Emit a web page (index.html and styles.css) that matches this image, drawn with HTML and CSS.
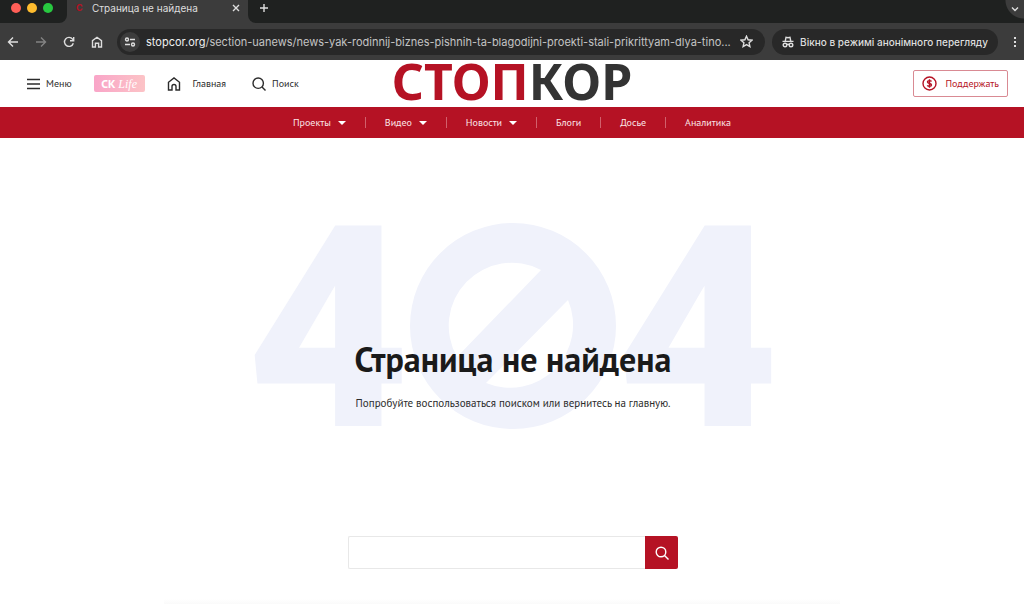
FILE: index.html
```html
<!DOCTYPE html>
<html lang="ru">
<head>
    <meta charset="UTF-8">
    <meta name="viewport" content="width=device-width, initial-scale=1.0">
    <title>Страница не найдена</title>
    <link rel="stylesheet" href="styles.css">
</head>
<body>
    <!-- Browser window -->
    <div class="browser">
        <div class="tab-strip">
            <div class="lights">
                <span class="light red"></span>
                <span class="light yellow"></span>
                <span class="light green"></span>
            </div>
            <div class="tab">
                <span class="favicon"><b>С</b></span>
                <span class="tab-title">Страница не найдена</span>
                <button class="icon-btn" aria-label="Закрыть вкладку">
                    <svg width="8" height="8" viewBox="0 0 8 8"><path d="M1 1l6 6M7 1l-6 6"/></svg>
                </button>
            </div>
            <button class="icon-btn new-tab" aria-label="Новая вкладка">
                <svg width="10" height="10" viewBox="0 0 10 10"><path d="M5 1v8M1 5h8"/></svg>
            </button>
            <button class="icon-btn tab-search" aria-label="Поиск вкладок">
                <svg width="8" height="8" viewBox="0 0 8 8"><path d="M1 2.5l3 3 3-3"/></svg>
            </button>
        </div>
        <div class="toolbar">
            <div class="nav-buttons">
                <button class="icon-btn" aria-label="Назад">
                    <svg width="12" height="12" viewBox="0 0 12 12"><path d="M11 6H1.5M6 1.5L1.5 6 6 10.5"/></svg>
                </button>
                <button class="icon-btn dim" aria-label="Вперёд">
                    <svg width="12" height="12" viewBox="0 0 12 12"><path d="M1 6h9.5M6 1.5L10.5 6 6 10.5"/></svg>
                </button>
                <button class="icon-btn" aria-label="Обновить">
                    <svg width="12" height="12" viewBox="0 0 12 12"><path d="M10.3 7.2A4.5 4.5 0 1 1 9.6 3.2L10.5 4.5M10.7 1v3.7H7"/></svg>
                </button>
                <button class="icon-btn" aria-label="Домой">
                    <svg width="12" height="12" viewBox="0 0 12 12"><path d="M1.5 11V4.7L6 1.3l4.5 3.4V11H7.6V7.2H4.4V11z"/></svg>
                </button>
            </div>
            <div class="address">
                <span class="site-info">
                    <svg width="12" height="12" viewBox="0 0 12 12"><circle cx="3" cy="3.5" r="1.5"/><path d="M6 3.5h5M1 8.5h5"/><circle cx="9" cy="8.5" r="1.5"/></svg>
                </span>
                <span class="url"><b>stopcor.org</b>/section-uanews/news-yak-rodinnij-biznes-pishnih-ta-blagodijni-proekti-stali-prikrittyam-dlya-tino...</span>
                <button class="icon-btn" aria-label="Добавить в закладки">
                    <svg width="13" height="13" viewBox="0 0 13 13"><path d="M6.5 1.2l1.6 3.6 3.9.4-2.9 2.6.8 3.8-3.4-2-3.4 2 .8-3.8L1 5.2l3.9-.4z"/></svg>
                </button>
            </div>
            <div class="incognito">
                <svg width="12" height="12" viewBox="0 0 12 12"><path d="M3.3 4.8L4 1.3l2 .5 2-.5.7 3.5M.5 5.4h11M4.9 9a1.2 1.2 0 0 1 2.2 0"/><circle cx="3" cy="9" r="1.8"/><circle cx="9" cy="9" r="1.8"/></svg>
                <span>Вікно в режимі анонімного перегляду</span>
            </div>
            <button class="icon-btn more" aria-label="Меню браузера">
                <svg width="4" height="12" viewBox="0 0 4 12"><path class="dots" d="M1 1h2v2H1zM1 5h2v2H1zM1 9h2v2H1z"/></svg>
            </button>
        </div>
    </div>

    <!-- Site header -->
    <header class="header">
        <div class="header-left">
            <button class="header-link menu-btn">
                <svg width="13" height="12" viewBox="0 0 13 12"><path d="M0 1.5h13M0 6h13M0 10.5h13"/></svg>
                Меню
            </button>
            <a class="life" href="#"><b>СК</b> <i>Life</i></a>
            <a class="header-link home-link" href="#">
                <svg width="14" height="14" viewBox="0 0 14 14"><path d="M1.5 13V5.3L7 1l5.5 4.3V13H9V9.5a2 2 0 0 0-4 0V13z"/></svg>
                Главная
            </a>
            <a class="header-link search-link" href="#">
                <svg width="14" height="14" viewBox="0 0 14 14"><circle cx="6.2" cy="6.2" r="5.2"/><path d="M10 10l3.5 3.5"/></svg>
                Поиск
            </a>
        </div>
        <a class="logo" href="#"><span>СТОП</span>КОР</a>
        <a class="support" href="#">
            <svg width="15" height="15" viewBox="0 0 15 15"><circle cx="7.5" cy="7.5" r="6.5"/><path d="M9.5 5.6C9.2 4.8 8.5 4.6 7.5 4.6c-1.2 0-2 .5-2 1.4 0 2 4 .9 4 3 0 .9-.8 1.4-2 1.4-1 0-1.8-.3-2.1-1.1M7.5 3.3v8.4"/></svg>
            Поддержать
        </a>
    </header>

    <nav class="nav">
        <a class="drop" href="#">Проекты</a>
        <a class="drop" href="#">Видео</a>
        <a class="drop" href="#">Новости</a>
        <a href="#">Блоги</a>
        <a href="#">Досье</a>
        <a href="#">Аналитика</a>
    </nav>

    <main class="not-found">
        <div class="message">
            <div class="code">
                <span>4</span>
                <!-- "no entry" ring between the digits -->
                <svg width="206" height="206" viewBox="0 0 206 206">
                    <path fill-rule="evenodd" d="M103 0a103 103 0 1 0 0 206a103 103 0 1 0 0-206zM131 47L47 134A63 63 0 0 1 131 47zM158 77A63 63 0 0 1 76 160z"/>
                </svg>
                <span>4</span>
            </div>
            <div class="text">
                <h1>Страница не найдена</h1>
                <p>Попробуйте воспользоваться поиском или вернитесь на главную.</p>
            </div>
        </div>
        <form class="search">
            <input type="text" aria-label="Поиск">
            <button type="button" aria-label="Найти">
                <svg width="14" height="14" viewBox="0 0 14 14"><circle cx="6" cy="6" r="4.8"/><path d="M9.5 9.5l4 4"/></svg>
            </button>
        </form>
    </main>
    <footer class="footer"></footer>
</body>
</html>
```
FILE: styles.css
```css
* {
    box-sizing: border-box;
}

body {
    margin: 0;
    background: #fff;
    color: #2b2b2b;
    font-family: "PT Sans", "Noto Sans", sans-serif;
    font-size: 10px;
    line-height: 16px;
}

a {
    color: inherit;
    text-decoration: none;
}

button {
    border: 0;
    padding: 0;
    background: none;
    color: inherit;
    font: inherit;
}

svg {
    display: block;
    flex: none;
    fill: none;
    stroke: currentColor;
    stroke-width: 1.4;
}

/* Browser window */
.browser {
    background: #3c3c3c;
    color: #dedede;
    font-family: Inter, sans-serif;
}

.tab-strip {
    display: flex;
    height: 23px;
    background: #3c3c3c;
}

.lights {
    display: flex;
    gap: 6px;
    width: 67px;
    padding: 3px 0 0 11px;
    border-radius: 0 0 8px 0;
    background: #1f2120;
}

.light {
    width: 10px;
    height: 10px;
    border-radius: 50%;
}

.red { background: #ff5f57; }
.yellow { background: #febc2e; }
.green { background: #28c840; }

.tab {
    display: flex;
    align-items: center;
    width: 181px;
    padding: 0 8px 7px 9px;
}

.favicon {
    width: 16px;
    color: #b51224;
    font-size: 9px;
}

.tab-title {
    flex: 1;
    white-space: nowrap;
}

.icon-btn {
    display: flex;
    align-items: center;
    justify-content: center;
}

.new-tab {
    width: 32px;
    padding-bottom: 7px;
    border-radius: 0 0 0 8px;
    background: #1f2120;
}

.tab-search {
    flex: 1;
    align-items: flex-start;
    justify-content: flex-end;
    padding: 5px 5px 0 0;
    background: radial-gradient(circle at 100% 0, #3c3c3c 18px, #1f2120 19px);
}

.toolbar {
    display: flex;
    align-items: center;
    height: 37px;
    padding: 0 7px;
}

.nav-buttons {
    display: flex;
    gap: 16px;
    width: 110px;
}

.dim {
    color: #838383;
}

.address {
    display: flex;
    flex: 1;
    align-items: center;
    min-width: 0;
    height: 26px;
    padding: 0 12px 0 3px;
    border-radius: 13px;
    background: #282828;
}

.site-info {
    display: flex;
    align-items: center;
    justify-content: center;
    width: 20px;
    height: 20px;
    margin-right: 6px;
    border-radius: 50%;
    background: #3c3c3c;
}

.url {
    flex: 1;
    overflow: hidden;
    color: #c4c4c4;
    font-size: 11px;
    white-space: nowrap;
}

.url b {
    color: #f0f0f0;
    font-weight: 400;
}

.incognito {
    display: flex;
    align-items: center;
    gap: 6px;
    height: 26px;
    margin-left: 7px;
    padding: 0 10px;
    border-radius: 13px;
    background: #282828;
    font-weight: 500;
    white-space: nowrap;
}

.more {
    margin-left: 15px;
}

.dots {
    fill: currentColor;
    stroke: none;
}

/* Site header */
.header {
    display: grid;
    grid-template-columns: 1fr auto 1fr;
    align-items: center;
    height: 47px;
    padding: 0 16px;
}

.header-left {
    display: flex;
    align-items: center;
    padding-left: 11px;
}

.header-link {
    display: flex;
    align-items: center;
    gap: 6px;
}

.life {
    display: flex;
    align-items: center;
    justify-content: center;
    gap: 3px;
    width: 51px;
    height: 17px;
    margin: 0 22px;
    border-radius: 2px;
    background: linear-gradient(90deg, #f9a5c8, #fcc3c6);
    color: #fff;
    font-size: 12px;
}

.life i {
    font-family: "Liberation Serif", serif;
}

.home-link {
    gap: 12px;
    margin-right: 26px;
}

.logo {
    padding-bottom: 4px;
    color: #333;
    font-family: "Noto Sans", sans-serif;
    font-size: 50px;
    font-weight: 700;
    line-height: 43px;
}

.logo span {
    color: #b51224;
}

.support {
    display: flex;
    align-items: center;
    justify-self: end;
    gap: 8px;
    height: 27px;
    padding: 0 8px;
    border: 1px solid #d98a93;
    border-radius: 2px;
    color: #b51224;
}

.nav {
    display: flex;
    align-items: center;
    justify-content: center;
    height: 31px;
    background: #b51224;
    color: #fbe6e8;
}

.nav a {
    display: flex;
    align-items: center;
    gap: 7px;
    padding: 0 19px;
}

.nav a + a::before {
    content: "";
    width: 1px;
    height: 11px;
    margin-left: -19px;
    margin-right: 12px;
    background: #d1606c;
}

.nav .drop::after {
    content: "";
    border: 4px solid transparent;
    border-top-color: #fff;
    border-bottom: 0;
}

/* 404 */
.not-found {
    padding: 85px 0 0 2px;
}

.message {
    display: grid;
    justify-items: center;
}

.code,
.text {
    grid-area: 1 / 1;
}

.code {
    display: flex;
    align-items: flex-start;
    height: 206px;
    color: #f0f2fb;
    font-family: Roboto, sans-serif;
    font-size: 282px;
    font-weight: 900;
    line-height: 214px;
}

.code svg {
    fill: currentColor;
    stroke: none;
}

.text {
    padding-top: 115px;
    text-align: center;
}

h1 {
    margin: 0 0 15px;
    color: #1a1a1a;
    font-size: 34px;
    line-height: 42px;
}

p {
    margin: 0;
    font-size: 11px;
}

.search {
    display: flex;
    width: 330px;
    height: 33px;
    margin: 107px auto 0;
}

.search input {
    flex: 1;
    min-width: 0;
    padding: 0 10px;
    border: 1px solid #e8e8e8;
    border-right: 0;
    border-radius: 2px 0 0 2px;
    font: inherit;
}

.search button {
    display: flex;
    align-items: center;
    justify-content: center;
    width: 33px;
    border-radius: 0 2px 2px 0;
    background: #b51224;
    color: #fff;
}

.footer {
    width: 66%;
    height: 5px;
    margin: 30px 0 0 16%;
    background: linear-gradient(#fff, #fafafa);
}
```
